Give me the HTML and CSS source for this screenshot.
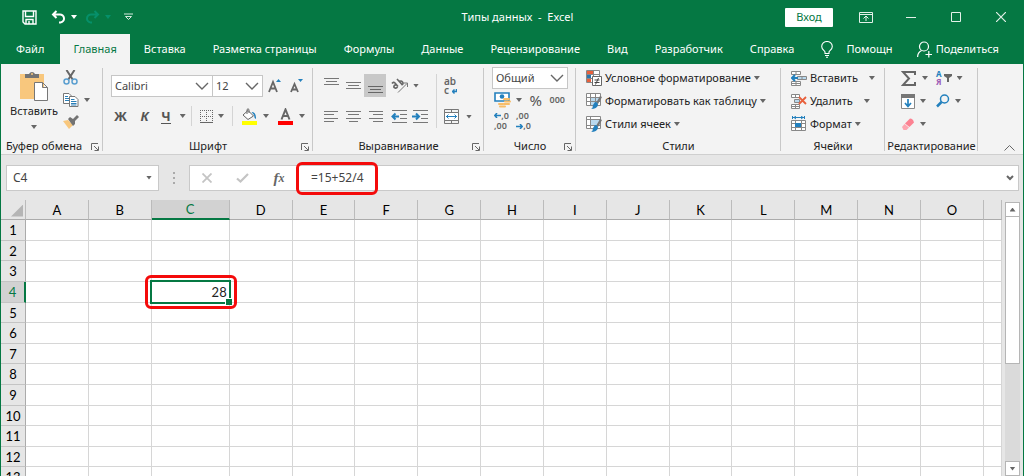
FILE: index.html
```
<!DOCTYPE html>
<html lang="ru">
<head>
<meta charset="utf-8">
<title>Типы данных - Excel</title>
<link rel="stylesheet" href="styles.css">
</head>
<body>
<div class="app">
  <header class="titlebar">
    <div class="quick">
      <button class="plain" aria-label="Сохранить"><svg width="15" height="15" viewBox="0 0 15 15" fill="none" stroke="#fff" stroke-width="1.4"><path d="M1 1h13v13H3l-2-2zM3.500 1v5.500h8V1M4 14v-4.500h7V14M7 11v3"/></svg></button>
      <button class="plain undo" aria-label="Отменить"><svg width="15" height="14" viewBox="0 0 15 14" fill="none" stroke="#fff" stroke-width="2"><path d="M5.500 1L2 4.500 5.500 8M2 4.500h6.500a4 4 0 0 1 1 8H8"/></svg><i class="caret light"></i></button>
      <button class="plain redo" aria-label="Вернуть"><svg width="15" height="14" viewBox="0 0 15 14" fill="none" stroke="#06906a" stroke-width="2"><path d="M9.500 1L13 4.500 9.500 8M13 4.500H6.500a4 4 0 0 0-1 8H7"/></svg><i class="caret dim"></i></button>
      <button class="plain" aria-label="Настройка панели"><svg width="9" height="8" viewBox="0 0 9 8" fill="none" stroke="#d5eadf"><path d="M0 1h9M1.500 3.500h6l-3 3z"/></svg></button>
    </div>
    <h1 class="title">Типы данных&nbsp; -&nbsp; Excel</h1>
    <div class="window-controls">
      <button class="signin">Вход</button>
      <button class="plain control" aria-label="Параметры ленты"><svg width="14" height="11" viewBox="0 0 14 11" fill="none" stroke="#e3f1e9"><path d="M.5.5h13v10H.5zM.5 2.500h13M7 9V4.500M4.500 6.500L7 4l2.500 2.500"/></svg></button>
      <button class="plain control" aria-label="Свернуть"><svg width="10" height="10" viewBox="0 0 10 10" stroke="#e3f1e9"><path d="M0 5.500h10"/></svg></button>
      <button class="plain control" aria-label="Развернуть"><svg width="10" height="10" viewBox="0 0 10 10" fill="none" stroke="#e3f1e9"><path d="M.5.5h9v9h-9z"/></svg></button>
      <button class="plain control" aria-label="Закрыть"><svg width="10" height="10" viewBox="0 0 10 10" stroke="#e3f1e9" stroke-width="1.200"><path d="M0 0l10 10M10 0L0 10"/></svg></button>
    </div>
  </header>

  <nav class="tabs">
    <button class="tab file">Файл</button>
    <button class="tab active">Главная</button>
    <button class="tab">Вставка</button>
    <button class="tab">Разметка страницы</button>
    <button class="tab">Формулы</button>
    <button class="tab">Данные</button>
    <button class="tab">Рецензирование</button>
    <button class="tab">Вид</button>
    <button class="tab">Разработчик</button>
    <button class="tab">Справка</button>
    <button class="tab helper"><svg width="12" height="17" viewBox="0 0 12 17" fill="none" stroke="#fff" stroke-width="1.100"><path d="M4 12.500V11C3.500 9.500.700 8.500.700 5.500a5.300 5 0 0 1 10.600 0C11.300 8.500 8.500 9.500 8 11v1.500zM4 14.500h4M5 16.300h2"/></svg>Помощн</button>
    <button class="tab share"><svg width="15" height="17" viewBox="0 0 15 17" fill="none" stroke="#fff" stroke-width="1.200"><circle cx="7" cy="5.500" r="4.500"/><path d="M.6 16c0-4 2-5.500 4-6.500M8.500 13.500H15M11.800 10v6.500"/></svg>Поделиться</button>
  </nav>

  <div class="ribbon">
    <section class="group clipboard">
      <div class="group-body">
        <button class="plain paste"><svg width="28" height="30" viewBox="0 0 28 30"><path fill="#f8c77d" d="M0 3h24v25H0z"/><path fill="#737373" d="M5 3h4a3.300 3.300 0 0 1 6 0h4v4H5z"/><circle cx="12" cy="3" r="1" fill="#f8c77d"/><path fill="#fff" stroke="#777" d="M14.500 11.500h8l5 5v13h-13zM22.500 11.500v5h5"/></svg><span>Вставить</span><i class="caret"></i></button>
        <div class="clip-tools">
          <button class="plain" aria-label="Вырезать"><svg width="15" height="15" viewBox="0 0 15 15" fill="none"><path stroke="#666" stroke-width="2" d="M3.500 0l6.500 10M11.500 0L5 10"/><circle cx="3.500" cy="11.500" r="2.500" stroke="#5b9fd0" stroke-width="1.500"/><circle cx="11.500" cy="11.500" r="2.500" stroke="#5b9fd0" stroke-width="1.500"/></svg></button>
          <button class="plain" aria-label="Копировать"><svg width="16" height="14" viewBox="0 0 16 14" fill="#fff" stroke="#777"><path d="M.5.5H6l2.500 2.500v7.500h-8z"/><path stroke="#2a7fb8" d="M2 3.500h3M2 5.500h4M2 7.500h4"/><path d="M6.500 3.500H12l3 3v7h-8.500z"/><path stroke="#2a7fb8" d="M8 6.500h3.500M8 8.500h5.500M8 10.500h5.500M8 12h5.500"/></svg><i class="caret"></i></button>
          <button class="plain" aria-label="Формат по образцу"><svg width="16" height="14" viewBox="0 0 16 14"><path fill="#f8c77d" d="M0 6l5-1 5 5-4 4z"/><path fill="#737373" d="M5 4l2-2 3 2 4-4 2 2-4 4v3l-2 2z"/></svg></button>
        </div>
      </div>
      <footer class="group-name">Буфер обмена</footer>
      <button class="plain launcher" aria-label="Параметры буфера"><svg width="8" height="8" viewBox="0 0 8 8" fill="none" stroke="#666"><path d="M.5 7V.5H7M3 3l4 4M3.500 7.500h4v-4"/></svg></button>
    </section>

    <section class="group font">
      <div class="group-body">
        <div class="tool-row font-top">
          <span class="combo face"><select aria-label="Шрифт"><option>Calibri</option></select><svg width="14" height="8" viewBox="0 0 14 8" fill="none" stroke="#666" stroke-width="1.400"><path d="M1 1l6 6 6-6"/></svg></span><span class="combo size"><select aria-label="Размер шрифта"><option>12</option></select><svg width="14" height="8" viewBox="0 0 14 8" fill="none" stroke="#666" stroke-width="1.400"><path d="M1 1l6 6 6-6"/></svg></span>
          <button class="plain grow" aria-label="Увеличить шрифт"><svg width="13" height="14" viewBox="0 0 13 14"><path fill="none" stroke="#666" stroke-width="1.800" d="M1 13L5 3l4 10M2.500 9.500h5"/><path fill="#2380bd" d="M8 3l2.500-3L13 3z"/></svg></button>
          <button class="plain shrink" aria-label="Уменьшить шрифт"><svg width="13" height="14" viewBox="0 0 13 14"><path fill="none" stroke="#666" stroke-width="1.800" d="M1 13l3.500-8L8 13M2.500 10.500h4"/><path fill="#2380bd" d="M8 0h5l-2.500 3z"/></svg></button>
        </div>
        <div class="tool-row font-bottom">
          <button class="plain glyph">Ж</button>
          <button class="plain glyph italic">К</button>
          <button class="plain glyph"><span class="underlined">Ч</span><i class="caret"></i></button>
          <i class="rule"></i>
          <button class="plain" aria-label="Границы"><svg width="13" height="13" viewBox="0 0 13 13" fill="none" stroke="#666"><path stroke-dasharray="1 1" d="M.5 0v12M6.500 0v12M12.500 0v12M0 .5h13M0 6.500h13"/><path d="M0 12.500h13"/></svg><i class="caret"></i></button>
          <i class="rule"></i>
          <button class="plain" aria-label="Цвет заливки"><svg width="17" height="17" viewBox="0 0 17 17"><path fill="#fff" stroke="#666" d="M7 2.500L12.500 8 7 11.500 2 7z"/><path fill="none" stroke="#666" d="M6 6V1.500q1-1.500 2 0V5"/><path fill="#2380bd" d="M10.500 4q5 0 4.500 7-2-1-2-4z"/><path fill="#ff0" d="M1 13h15v4H1z"/></svg><i class="caret"></i></button>
          <button class="plain" aria-label="Цвет текста"><svg width="17" height="17" viewBox="0 0 17 17"><path fill="none" stroke="#666" stroke-width="2" d="M4.500 11.500l4-10 4 10M6 8h5"/><path fill="red" d="M1 13h15v4H1z"/></svg><i class="caret"></i></button>
        </div>
      </div>
      <footer class="group-name">Шрифт</footer>
      <button class="plain launcher" aria-label="Параметры шрифта"><svg width="8" height="8" viewBox="0 0 8 8" fill="none" stroke="#666"><path d="M.5 7V.5H7M3 3l4 4M3.500 7.500h4v-4"/></svg></button>
    </section>

    <section class="group align">
      <div class="group-body">
        <div class="align-grid">
          <button class="plain" aria-label="По верхнему краю"><svg width="15" height="15" viewBox="0 0 15 15" stroke="#777"><path d="M0 .5h15M2 3.500h11M0 6.500h15"/></svg></button>
          <button class="plain" aria-label="По середине"><svg width="15" height="15" viewBox="0 0 15 15" stroke="#777"><path d="M0 4.500h15M2 7.500h11M0 10.500h15"/></svg></button>
          <button class="plain pressed" aria-label="По нижнему краю"><svg width="15" height="15" viewBox="0 0 15 15" stroke="#666"><path d="M0 8.500h15M2 11.500h11M0 14.500h15"/></svg></button>
          <button class="plain wide" aria-label="Ориентация"><svg width="17" height="15" viewBox="0 0 17 15"><g fill="none" stroke="#666" stroke-width="1.600"><path d="M1 5.500q1.500-2 3-.5l3 3.500M5.500 7q-2-.5-2.500 1t1 2 2.500-1M6 1l5 5.500M8 4q2-2 3.500 0t-1 3"/></g><path fill="none" stroke="#777" d="M7 14.500l9-9M12.500 5h4v4"/></svg><i class="caret"></i></button>
          <button class="plain" aria-label="По левому краю"><svg width="15" height="13" viewBox="0 0 15 13" stroke="#777"><path d="M0 1.500h14M0 4.500h10M0 8.500h14M0 11.500h10"/></svg></button>
          <button class="plain" aria-label="По центру"><svg width="15" height="13" viewBox="0 0 15 13" stroke="#777"><path d="M0 1.500h15M2 4.500h11M0 8.500h15M3 11.500h9"/></svg></button>
          <button class="plain" aria-label="По правому краю"><svg width="15" height="13" viewBox="0 0 15 13" stroke="#777"><path d="M1 1.500h14M5 4.500h10M1 8.500h14M5 11.500h10"/></svg></button>
          <div class="indent">
            <button class="plain" aria-label="Уменьшить отступ"><svg width="16" height="13" viewBox="0 0 16 13" stroke="#777"><path d="M1 .5h15M9 4.500h7M9 8.500h7M1 12.500h15"/><path fill="none" stroke="#2380bd" stroke-width="2" d="M8 6.500H2M4.500 3.500l-3 3 3 3"/></svg></button>
            <button class="plain" aria-label="Увеличить отступ"><svg width="16" height="13" viewBox="0 0 16 13" stroke="#777"><path d="M1 .5h15M9 4.500h7M9 8.500h7M1 12.500h15"/><path fill="none" stroke="#2380bd" stroke-width="2" d="M0 6.500h6M4 3.500l3 3-3 3"/></svg></button>
          </div>
        </div>
        <i class="rule tall"></i>
        <div class="align-side">
          <button class="plain wrap" aria-label="Перенести текст"><span>ab</span><span>c</span><svg width="5" height="5" viewBox="0 0 5 5" fill="none" stroke="#2380bd" stroke-width="1.500"><path d="M4.500 0v2.500H1M2.500.5l-2 2 2 2"/></svg></button>
          <button class="plain" aria-label="Объединить"><svg width="15" height="15" viewBox="0 0 15 15" fill="none" stroke="#777"><path d="M.5.5h14v14H.5zM.5 3.500h14M.5 11.500h14M7.500.5v3M7.500 11.500v3"/><path fill="#fff" d="M.5 3.500h14v8H.5z"/><path stroke="#2380bd" d="M2 7.500h11M4.500 5.500l-2 2 2 2M10.500 5.500l2 2-2 2"/></svg><i class="caret"></i></button>
        </div>
      </div>
      <footer class="group-name">Выравнивание</footer>
      <button class="plain launcher" aria-label="Параметры выравнивания"><svg width="8" height="8" viewBox="0 0 8 8" fill="none" stroke="#666"><path d="M.5 7V.5H7M3 3l4 4M3.500 7.500h4v-4"/></svg></button>
    </section>

    <section class="group number">
      <div class="group-body">
        <span class="combo format"><select aria-label="Числовой формат"><option>Общий</option></select><svg width="14" height="8" viewBox="0 0 14 8" fill="none" stroke="#666" stroke-width="1.400"><path d="M1 1l6 6 6-6"/></svg></span>
        <div class="tool-row number-row">
          <button class="plain" aria-label="Денежный формат"><svg width="17" height="16" viewBox="0 0 17 16"><path fill="#fff" stroke="#2380bd" stroke-width="1.600" d="M1 1h14v8H1z"/><circle cx="8" cy="4.500" r="2.300" fill="#2380bd"/><g fill="#f8bd68"><rect x="9" y="6" width="7" height="2" rx="1"/><rect x="10" y="8.500" width="7" height="2" rx="1"/><rect x="9" y="11" width="7" height="2" rx="1"/><rect x="4" y="11" width="6" height="2" rx="1"/><rect x="5" y="13.500" width="7" height="2" rx="1"/></g></svg><i class="caret"></i></button>
          <button class="plain percent">%</button>
          <button class="plain zeros">000</button>
        </div>
        <div class="tool-row decimals">
          <button class="plain decimal" aria-label="Увеличить разрядность"><span class="short">,0</span><span>,00</span><svg width="7" height="5" viewBox="0 0 7 5" fill="none" stroke="#2380bd" stroke-width="1.500"><path d="M7 2.500H1M3 0L.8 2.500 3 5"/></svg></button>
          <button class="plain decimal less" aria-label="Уменьшить разрядность"><span>,00</span><span class="short">,0</span><svg width="7" height="5" viewBox="0 0 7 5" fill="none" stroke="#2380bd" stroke-width="1.500"><path d="M0 2.500h6M4 0l2.200 2.500L4 5"/></svg></button>
        </div>
      </div>
      <footer class="group-name">Число</footer>
      <button class="plain launcher" aria-label="Параметры числа"><svg width="8" height="8" viewBox="0 0 8 8" fill="none" stroke="#666"><path d="M.5 7V.5H7M3 3l4 4M3.500 7.500h4v-4"/></svg></button>
    </section>

    <section class="group styles">
      <div class="group-body command-list">
        <button class="plain command"><svg width="16" height="16" viewBox="0 0 16 16"><path fill="#fff" stroke="#888" d="M.5.5h13v12H.5zM7.500.5v12M.5 4.500h13M.5 8.500h13"/><path fill="#e8603c" d="M1 1h6v3H1zM1 9h4v3H1z"/><path fill="#2b75ad" d="M1 5h4v3H1z"/><path fill="#fff" stroke="#666" d="M6.500 6.500h9v9h-9z"/><path stroke="#444" d="M8.500 10h5M8.500 12.500h5M12.500 8l-3 6.500"/></svg><span>Условное форматирование</span><i class="caret"></i></button>
        <button class="plain command"><svg width="16" height="16" viewBox="0 0 16 16"><path fill="#fff" stroke="#888" d="M.5.5h14v12H.5zM4.500.5v12M9.500.5v12M.5 4.500h14M.5 8.500h14"/><path fill="#b9d9ee" d="M5 5h4v3H5zM5 9h4v3H5zM10 5h4v3h-4z"/><path fill="#777" d="M14 3l2 1-4 7-2-1z"/><path fill="#2380bd" d="M9 9q3 0 3 3-1 4-7 4 2-1 2-4z"/></svg><span>Форматировать как таблицу</span><i class="caret"></i></button>
        <button class="plain command"><svg width="16" height="16" viewBox="0 0 16 16"><path fill="#fff" stroke="#888" d="M.5.5h14v12H.5zM4.500.5v12M.5 3.500h14M.5 9.500h14"/><path fill="#b9d9ee" d="M5 4h9v5H5z"/><path fill="#777" d="M14 3l2 1-4 7-2-1z"/><path fill="#2380bd" d="M9 9q3 0 3 3-1 4-7 4 2-1 2-4z"/></svg><span>Стили ячеек</span><i class="caret"></i></button>
      </div>
      <footer class="group-name">Стили</footer>
    </section>

    <section class="group cells">
      <div class="group-body command-list">
        <button class="plain command"><svg width="16" height="15" viewBox="0 0 16 15" fill="#fff" stroke="#888"><path d="M.5.5h9v3h-9zM5 .5v3M.5 10.500h9v4h-9zM5 10.500v4M.5 12.500h9"/><path fill="#b9d9ee" d="M6.500 5.500h9v3h-9zM11 5.500v3"/><path fill="none" stroke="#2380bd" stroke-width="2" d="M7 7H1.500M4 4L1 7l3 3"/></svg><span>Вставить</span><i class="caret spaced"></i></button>
        <button class="plain command"><svg width="16" height="15" viewBox="0 0 16 15" fill="#fff" stroke="#888"><path d="M.5.5h8v3h-8zM4.500.5v3M.5 10.500h8v4h-8zM4.500 10.500v4M.5 12.500h8"/><path fill="#b9d9ee" d="M3.500 5.500h5v3h-5z"/><path stroke="#e8603c" stroke-width="1.800" d="M8 3l7 7M15 3l-7 7"/></svg><span>Удалить</span><i class="caret spaced"></i></button>
        <button class="plain command"><svg width="16" height="16" viewBox="0 0 16 16" fill="#fff" stroke="#888"><path stroke="#2380bd" d="M1 1.500h13M1.500 0v3M13.500 0v3M5 0L3 1.500 5 3M10 0l2 1.500L10 3"/><path d="M.5 4.500h14v10H.5zM4.500 4.500v10M10.500 4.500v10M.5 7.500h14M.5 11.500h14"/><path fill="#2380bd" stroke="none" d="M4 7h6v4H4z"/></svg><span>Формат</span><i class="caret"></i></button>
      </div>
      <footer class="group-name">Ячейки</footer>
    </section>

    <section class="group editing">
      <div class="group-body edit-grid">
        <button class="plain" aria-label="Сумма"><svg width="16" height="15" viewBox="0 0 16 15" fill="none" stroke="#666" stroke-width="2"><path d="M14 4V1H2l6 6.500L2 14h12v-3"/></svg><i class="caret"></i></button>
        <button class="plain" aria-label="Сортировка и фильтр"><span class="sort"><b>А</b><b>Я</b></span><svg width="8" height="8" viewBox="0 0 8 8"><path fill="#666" d="M0 0h8v2L5 4v4H3V4L0 2z"/></svg><i class="caret"></i></button>
        <button class="plain" aria-label="Заполнить"><svg width="14" height="15" viewBox="0 0 14 15"><path fill="#fff" stroke="#888" d="M.5.5h13v14H.5z"/><path fill="#777" d="M0 0h14v4H0z"/><path fill="none" stroke="#2380bd" stroke-width="1.700" d="M7 5v7M4 9l3 3.500L10 9"/></svg><i class="caret"></i></button>
        <button class="plain" aria-label="Найти"><svg width="14" height="14" viewBox="0 0 14 14" fill="none" stroke="#2380bd"><circle cx="8.500" cy="5" r="4" stroke-width="1.500"/><path stroke-width="2.500" d="M5.500 8L1 12.500"/></svg><i class="caret"></i></button>
        <button class="plain" aria-label="Очистить"><svg width="14" height="13" viewBox="0 0 14 13"><path fill="#fc8292" d="M4 5.500L9 .5q3 0 4 4L8.500 9z"/><path fill="#fda6b0" d="M3.500 6L8 9.500 5.500 12H2.500L1 9z"/></svg><i class="caret"></i></button>
      </div>
      <footer class="group-name">Редактирование</footer>
    </section>
    <button class="plain collapse" aria-label="Свернуть ленту"><svg width="11" height="6" viewBox="0 0 11 6" fill="none" stroke="#666"><path d="M.5 5.500l5-5 5 5"/></svg></button>
  </div>

  <div class="formula-bar">
    <div class="name-box"><input type="text" value="C4" aria-label="Имя ячейки"><i class="caret"></i></div>
    <i class="dots"></i>
    <div class="formula-box">
      <button class="plain" aria-label="Отмена"><svg width="10" height="10" viewBox="0 0 10 10" stroke="#c4c4c4" stroke-width="1.800"><path d="M.5.5l9 9M9.500.5l-9 9"/></svg></button>
      <button class="plain" aria-label="Ввод"><svg width="13" height="10" viewBox="0 0 13 10" fill="none" stroke="#c4c4c4" stroke-width="2.200"><path d="M1 5.500l3.500 3L12 1"/></svg></button>
      <button class="plain fx" aria-label="Вставить функцию">f<small>x</small></button>
      <div class="formula-entry"><input type="text" value="=15+52/4" aria-label="Формула"><i class="callout"></i></div>
      <button class="plain" aria-label="Развернуть строку формул"><svg width="8" height="6" viewBox="0 0 8 6" fill="none" stroke="#666" stroke-width="2"><path d="M1 1l3 3 3-3"/></svg></button>
    </div>
  </div>

  <main class="workspace">
    <div class="sheet-pane"><table class="sheet" id="sheet"></table></div>
    <div class="scrollbar">
      <button class="plain scroll-button" aria-label="Вверх"><i class="caret up"></i></button>
      <div class="thumb"></div>
      <div class="track"></div>
      <button class="plain scroll-button" aria-label="Вниз"><i class="caret"></i></button>
    </div>
  </main>
</div>
<script src="script.js"></script>
</body>
</html>
```
FILE: styles.css
```
* { box-sizing: border-box; }
body { margin: 0; font: 11px/16px "Noto Sans", "Open Sans", sans-serif; color: #222; }
button, input, select { font: inherit; color: inherit; margin: 0; }
svg { display: block; flex: none; }

.app { display: flex; flex-direction: column; height: 100vh; overflow: hidden; background: #e6e6e6; border: solid #057843; border-width: 0 1px; }
.plain { display: flex; align-items: center; justify-content: center; gap: 5px; padding: 0; border: 0; background: none; }
.caret { flex: none; width: 6px; height: 4px; background: #666; clip-path: polygon(0 0, 100% 0, 50% 100%); }
.caret.light { background: #fff; }
.caret.dim { background: #06906a; }
.caret.up { clip-path: polygon(50% 0, 100% 100%, 0 100%); }

.titlebar { display: flex; align-items: center; flex: none; height: 34px; background: #057843; color: #fff; }
.quick { display: flex; align-items: center; flex: 1; padding-left: 21px; }
.undo { margin-left: 14px; }
.redo { margin: 0 13px 0 8px; }
.title { margin: 0 10px 0 0; font-size: 11px; font-weight: 400; }
.window-controls { display: flex; align-items: center; justify-content: flex-end; flex: 1; }
.signin { width: 48px; height: 19px; margin-right: 10px; padding: 0; border: 0; border-radius: 1px; background: #fff; color: #057843; line-height: 18px; }
.control { width: 45px; height: 28px; }

.tabs { display: flex; justify-content: space-between; flex: none; height: 30px; background: #057843; }
.tab { display: flex; align-items: center; gap: 13px; padding: 0 13px; border: 0; background: none; color: #fff; white-space: nowrap; }
.tab.file { padding: 0 15px; }
.tab.active { background: #f3f3f3; color: #057843; }
.tab.share { gap: 4px; padding: 0 24px 0 10px; }

.ribbon { display: flex; flex: none; height: 91px; background: #f3f3f3; border-bottom: 1px solid #cfcfcf; }
.group { position: relative; display: flex; flex-direction: column; flex: none; padding-top: 3px; }
.group::after { content: ""; position: absolute; top: 4px; right: 0; bottom: 3px; width: 1px; background: #c8c8c8; }
.group-body { display: flex; flex: 1; }
.group-name { height: 16px; text-align: center; white-space: nowrap; }
.launcher { position: absolute; right: 4px; bottom: 3px; }
.tool-row { display: flex; align-items: center; }
.rule { flex: none; width: 1px; height: 20px; background: #d4d4d4; }

.combo { position: relative; display: block; height: 22px; border: 1px solid #c6c6c6; background: #fff; color: #444; }
.combo select { width: 100%; height: 20px; padding: 0 3px; border: 0; background: transparent; appearance: none; line-height: 18px; }
.combo svg { position: absolute; right: 3px; top: 6px; pointer-events: none; }

.clipboard { width: 102px; }
.clipboard .group-name { padding-right: 16px; }
.paste { flex-direction: column; justify-content: flex-start; gap: 2px; width: 48px; margin-left: 9px; padding-top: 4px; }
.paste .caret { margin-top: 4px; }
.clip-tools { display: flex; flex-direction: column; align-items: flex-start; gap: 8px; padding: 3px 0 0 5px; }

.font { width: 210px; }
.font .group-body { flex-direction: column; gap: 9px; padding: 8px 8px 0; }
.face { width: 102px; }
.size { width: 50px; border-left: 0; }
.grow { margin-left: 5px; }
.shrink { margin-left: 9px; }
.font-bottom { gap: 8px; height: 20px; padding-left: 3px; }
.glyph { min-width: 13px; font-size: 13px; font-weight: 700; color: #555; gap: 9px; }
.italic { margin: 0 5px 0 3px; font-style: italic; }
.underlined { border-bottom: 1px solid #555; line-height: 14px; }

.align { width: 171px; }
.align .group-body { gap: 7px; padding: 7px 7px 0; }
.align-grid { display: grid; grid-template-columns: 22px 22px 22px 38px; grid-template-rows: 23px 23px; row-gap: 8px; }
.pressed { background: #c8c8c8; }
.wide { justify-content: flex-start; padding-left: 5px; }
.indent { display: flex; align-items: center; gap: 5px; padding-left: 5px; }
.rule.tall { height: 54px; margin-left: 5px; }
.align-side { display: grid; grid-template-rows: 23px 23px; row-gap: 8px; justify-items: start; }
.align-side .plain { gap: 7px; }
.align-side .wrap { position: relative; flex-direction: column; align-items: flex-start; gap: 0; width: 14px; font-size: 10px; font-weight: 600; line-height: 9px; color: #666; }
.wrap svg { position: absolute; right: 1px; bottom: 3px; }

.number { width: 92px; }
.number .group-body { flex-direction: column; padding: 0 8px; }
.format { width: 76px; }
.number-row { justify-content: space-between; height: 22px; padding: 0 3px 0 2px; }
.percent { font-size: 15px; color: #555; }
.zeros { font-size: 9px; font-weight: 600; color: #666; }
.decimals { gap: 7px; height: 20px; padding-left: 2px; }
.decimal { position: relative; flex-direction: column; align-items: flex-start; gap: 0; width: 15px; font-size: 9px; line-height: 10px; font-weight: 600; color: #666; }
.decimal .short { align-self: flex-end; }
.decimal svg { position: absolute; left: 0; top: 2px; }
.decimal.less svg { top: auto; bottom: 2px; }

.command-list { flex-direction: column; align-items: flex-start; gap: 7px; padding-top: 3px; }
.command { gap: 3px; height: 16px; white-space: nowrap; }
.spaced { margin-left: 8px; }
.styles { width: 205px; }
.styles .command-list { padding-left: 10px; }
.cells { width: 104px; }
.cells .command-list { padding-left: 10px; }

.editing { width: 93px; }
.edit-grid { display: grid; grid-template-columns: 35px 1fr; grid-template-rows: 16px 16px 16px; row-gap: 7px; justify-items: start; padding: 3px 0 0 16px; }
.sort { display: flex; flex-direction: column; font-size: 8px; line-height: 8px; color: #2380bd; }
.sort b + b { color: #9c5bb5; }
.edit-grid .sort + svg { margin-left: -3px; }
.collapse { align-self: flex-end; margin: 0 8px 3px auto; }

.formula-bar { display: flex; align-items: center; flex: none; height: 45px; padding: 0 4px 0 5px; font-size: 12px; }
.name-box, .formula-box { display: flex; align-items: center; height: 26px; border: 1px solid #c9c9c9; background: #fff; }
.name-box { width: 153px; padding-right: 6px; color: #444; }
.name-box input, .formula-entry input { width: 100%; min-width: 0; padding: 0 6px; border: 0; background: none; }
.dots { width: 2px; height: 12px; margin: 0 14px; background: repeating-linear-gradient(#aaa 0 2px, transparent 2px 5px); }
.formula-box { flex: 1; padding: 0 4px 0 12px; gap: 24px; }
.fx { width: 12px; font: italic 700 15px/18px "Liberation Serif", serif; gap: 0; color: #666; }
.fx small { font-size: 12px; }
.formula-entry { position: relative; flex: 1; color: #444; }
.formula-entry input { padding: 0 2px; }
.callout { position: absolute; border: 3px solid #f40b0b; border-radius: 6px; pointer-events: none; z-index: 2; }
.formula-entry .callout { left: -13px; top: -8px; width: 82px; height: 33px; }

.workspace { display: flex; flex: 1; min-height: 0; }
.sheet-pane { flex: 1; min-width: 0; overflow: hidden; }
.sheet { width: 100%; table-layout: fixed; border-collapse: separate; border-spacing: 0; font: 13px/16px Lato, sans-serif; color: #222; }
.sheet tr { height: 21px; }
.sheet tr:nth-child(5n + 2), .sheet tr:nth-child(5n + 5) { height: 20px; }
.sheet thead tr { height: 20px; }
.sheet th, .sheet td { padding: 0; border: solid #d6d6d6; border-width: 0 1px 1px 0; font-weight: 400; }
.sheet td { position: relative; background: #fff; text-align: right; }
.sheet th { background: #e6e6e6; border-color: #ababab; color: #000; }
.sheet tbody th { border-bottom-color: #c4c4c4; }
.sheet thead th { border-right-color: #bbb; }
.sheet .picked { background: #d2d2d2; color: #057843; border-bottom: 2px solid #057843; }
.sheet tbody .picked { border-right: 2px solid #057843; border-bottom: 1px solid #c4c4c4; }
.row-head { width: 25px; }
.wide-col { width: 78px; }
.cut-col { width: 18px; }
.corner i { display: block; width: 12px; height: 12px; margin: 2px 0 0 10px; background: #b5b5b5; clip-path: polygon(100% 0, 100% 100%, 0 100%); }
.sheet .selected { padding-right: 2px; }
.selection { position: absolute; inset: -2px; border: 2px solid #057843; z-index: 1; }
.selection::after { content: ""; position: absolute; right: -3px; bottom: -3px; width: 6px; height: 6px; background: #057843; border: solid #fff; border-width: 1px 0 0 1px; }
.selected .callout { inset: -7px -8px -7px -7px; }

.scrollbar { display: flex; flex-direction: column; flex: none; width: 21px; padding: 2px 3px 0 3px; }
.scroll-button, .thumb { flex: none; border: 1px solid #b5b5b5; background: #fff; }
.scroll-button { height: 15px; }
.thumb { height: 147px; border-top: 0; }
.track { flex: 1; background: #dadada; }
```
FILE: script.js
```
const columns = "ABCDEFGHIJKLMNO".split("");
const rowCount = 13;
const active = { column: "C", row: 4, value: "28" };

const cols = columns.map(c => `<col${c === active.column ? ' class="wide-col"' : ""}>`).join("");
const heads = columns.map(c => `<th${c === active.column ? ' class="picked"' : ""}>${c}</th>`).join("");

let rows = "";
for (let r = 1; r <= rowCount; r++) {
  const cells = columns.map(c =>
    c === active.column && r === active.row
      ? `<td class="selected">${active.value}<i class="selection"></i><i class="callout"></i></td>`
      : "<td></td>"
  ).join("");
  rows += `<tr><th${r === active.row ? ' class="picked"' : ""}>${r}</th>${cells}<td></td></tr>`;
}

document.getElementById("sheet").innerHTML =
  `<colgroup><col class="row-head">${cols}<col class="cut-col"></colgroup>` +
  `<thead><tr><th class="corner"><i></i></th>${heads}<th></th></tr></thead><tbody>${rows}</tbody>`;
```
